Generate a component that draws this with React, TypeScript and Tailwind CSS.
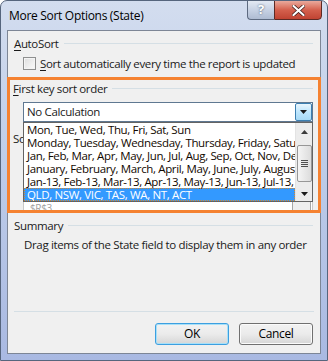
import React from 'react';

const items = [
    'Mon, Tue, Wed, Thu, Fri, Sat, Sun',
    'Monday, Tuesday, Wednesday, Thursday, Friday, Saturday, Sunday',
    'Jan, Feb, Mar, Apr, May, Jun, Jul, Aug, Sep, Oct, Nov, Dec',
    'January, February, March, April, May, June, July, August, September',
    'Jan-13, Feb-13, Mar-13, Apr-13, May-13, Jun-13, Jul-13, Aug-13',
    'QLD, NSW, VIC, TAS, WA, NT, ACT',
];

const GroupHeading: React.FC<{ accel?: string; rest: string }> = ({ accel, rest }) => (
    <div className="flex items-center h-[13px] pl-[6px] pr-[7px]">
        <span className="leading-[13px] whitespace-nowrap">
            {accel && <span className="underline underline-offset-2">{accel}</span>}
            {rest}
        </span>
        <div className="flex-1 h-px bg-[#d5dfe5] ml-[5px]" />
    </div>
);

const Triangle: React.FC<{ up?: boolean; className?: string }> = ({ up, className }) => (
    <svg width="7" height="4" viewBox="0 0 7 4" className={className}>
        {up ? <path d="M0 4 L3.5 0 L7 4 Z" fill="#3b3b3b" /> : <path d="M0 0 L7 0 L3.5 4 Z" fill="#1b1b1b" />}
    </svg>
);

const DialogButton: React.FC<{ label: string; isDefault?: boolean }> = ({ label, isDefault }) => (
    <button
        className={`w-[74px] h-[22px] rounded-[3px] border text-[12px] text-black bg-gradient-to-b from-[#f2f2f2] via-[#ebebeb] to-[#d6d6d6] ${
            isDefault ? 'border-[#3c9fe0] shadow-[inset_0_0_0_1px_#a8e0f8]' : 'border-[#707070] shadow-[inset_0_0_0_1px_#fbfbfb]'
        }`}
    >
        {label}
    </button>
);

const App: React.FC = () => {
    return (
        <div className="w-[328px] h-[361px] font-['Open_Sans','Noto_Sans',sans-serif] text-[11.5px] text-[#1a1a1a] tracking-[-0.35px]">
            <div className="w-full h-full flex flex-col rounded-t-[7px] border border-[#56657d] bg-gradient-to-b from-[#d3ddef] via-[#bccbe8] to-[#a9b9e2] overflow-hidden">
                {/* title bar */}
                <div className="h-[29px] flex items-start justify-between pl-[8px] pr-[5px]">
                    <div className="pt-[6px] text-[12px] text-black tracking-[-0.3px]">More Sort Options (State)</div>
                    <div className="flex -mt-px">
                        <div className="w-[27px] h-[20px] rounded-bl-[4px] border border-[#5d6a80] border-r-0 bg-gradient-to-b from-[#e3e9f3] via-[#c7d2e4] to-[#aebbd2] flex items-center justify-center text-white font-bold text-[13px] [text-shadow:0_0_2px_#3b4a60]">
                            ?
                        </div>
                        <div className="w-[48px] h-[20px] rounded-br-[4px] border border-[#5d2a24] bg-gradient-to-b from-[#e9a99c] via-[#d4604d] to-[#c04332] flex items-center justify-center">
                            <svg width="13" height="11" viewBox="0 0 13 11">
                                <path d="M1.5 1 L11.5 10 M11.5 1 L1.5 10" stroke="#3b1a16" strokeWidth="3.6" strokeLinecap="round" />
                                <path d="M1.5 1 L11.5 10 M11.5 1 L1.5 10" stroke="#ffffff" strokeWidth="2.2" strokeLinecap="round" />
                            </svg>
                        </div>
                    </div>
                </div>

                {/* client area */}
                <div className="mx-[6px] h-[324px] border border-[#7d8696] bg-[#f0f0f0] flex flex-col">
                    <div className="pt-[6px]">
                        <GroupHeading accel="A" rest="utoSort" />
                    </div>
                    <div className="flex items-center h-[13px] mt-[7px] pl-[15px]">
                        <div className="w-[13px] h-[13px] border border-[#8e8f8f] bg-gradient-to-br from-[#dedede] to-[#fbfbfb] shadow-[inset_0_0_0_1px_#f4f4f4]" />
                        <span className="ml-[4px] leading-[13px] whitespace-nowrap">
                            <span className="underline underline-offset-2">S</span>ort automatically every time the report is updated
                        </span>
                    </div>

                    {/* highlighted section */}
                    <div className="-mx-px mt-[7px] h-[136px] border-[3px] border-[#f58231] relative overflow-hidden">
                        <div className="pt-[2px] -ml-[1px]">
                            <div className="flex items-center h-[13px] pl-[4px] pr-[5px]">
                                <span className="leading-[13px] whitespace-nowrap">
                                    <span className="underline underline-offset-2">F</span>irst key sort order
                                </span>
                                <div className="flex-1 h-px bg-[#d5dfe5] ml-[5px]" />
                            </div>
                        </div>

                        <div className="relative ml-[13px] mt-[7px] w-[290px] z-10">
                            <div className="h-[20px] border border-[#5f7891] bg-white flex items-center">
                                <span className="pl-[3px] flex-1">No Calculation</span>
                                <div className="w-[17px] h-[18px] border border-[#3c7fb1] rounded-[2px] bg-gradient-to-b from-[#eaf6fd] via-[#bee6fd] to-[#a7d9f5] flex items-center justify-center">
                                    <Triangle />
                                </div>
                            </div>

                            {/* open list */}
                            <div className="absolute left-0 top-full w-[290px] h-[80px] border border-[#646464] bg-white flex">
                                <div className="flex-1 overflow-hidden">
                                    {items.map((item, i) => (
                                        <div
                                            key={item}
                                            className={`h-[13px] leading-[13px] pl-[3px] whitespace-nowrap ${
                                                i === items.length - 1
                                                    ? 'bg-[#3399ff] text-white outline outline-1 outline-dotted outline-[#d4872f] -outline-offset-1'
                                                    : 'text-[#120800]'
                                            }`}
                                        >
                                            {item}
                                        </div>
                                    ))}
                                </div>
                                <div className="w-[17px] bg-[#ececec] border-l border-[#e3e3e3] flex flex-col items-center">
                                    <div className="h-[17px] flex items-center justify-center">
                                        <Triangle up />
                                    </div>
                                    <div className="mt-[5px] w-[15px] h-[37px] rounded-[2px] border border-[#979797] bg-gradient-to-r from-[#f5f5f5] to-[#dcdcdc] flex flex-col items-center justify-center gap-[1px]">
                                        <div className="w-[7px] h-px bg-[#505050]" />
                                        <div className="w-[7px] h-px bg-[#505050]" />
                                        <div className="w-[7px] h-px bg-[#505050]" />
                                        <div className="w-[7px] h-px bg-[#505050]" />
                                    </div>
                                    <div className="flex-1" />
                                    <div className="h-[14px] flex items-center justify-center">
                                        <Triangle />
                                    </div>
                                </div>
                            </div>
                        </div>

                        <div className="pl-[4px] mt-[10px] h-[13px] leading-[13px] -ml-[1px]">Sort by</div>

                        <div className="absolute left-[13px] top-[119px] w-[290px] h-[20px] border border-[#c9c9c9] bg-white flex items-start">
                            <span className="pl-[6px] pt-[2px] text-[#a0a0a0] text-[10px] leading-[12px] flex-1">$R$3</span>
                            <div className="w-[19px] h-[14px] mr-px border border-[#a5a5a5] rounded-[2px] bg-[#eeeeee]" />
                        </div>
                    </div>

                    <div className="mt-[6px]">
                        <GroupHeading rest="Summary" />
                    </div>
                    <div className="mt-[6px] pl-[16px] h-[13px] leading-[13px] whitespace-nowrap">
                        Drag items of the State field to display them in any order
                    </div>

                    <div className="flex-1" />
                    <div className="mx-[6px] h-px bg-[#d5dfe5]" />
                    <div className="flex justify-end gap-[10px] pr-[7px] pt-[11px] pb-[8px]">
                        <DialogButton label="OK" isDefault />
                        <DialogButton label="Cancel" />
                    </div>
                </div>
            </div>
        </div>
    );
};

export default App;
